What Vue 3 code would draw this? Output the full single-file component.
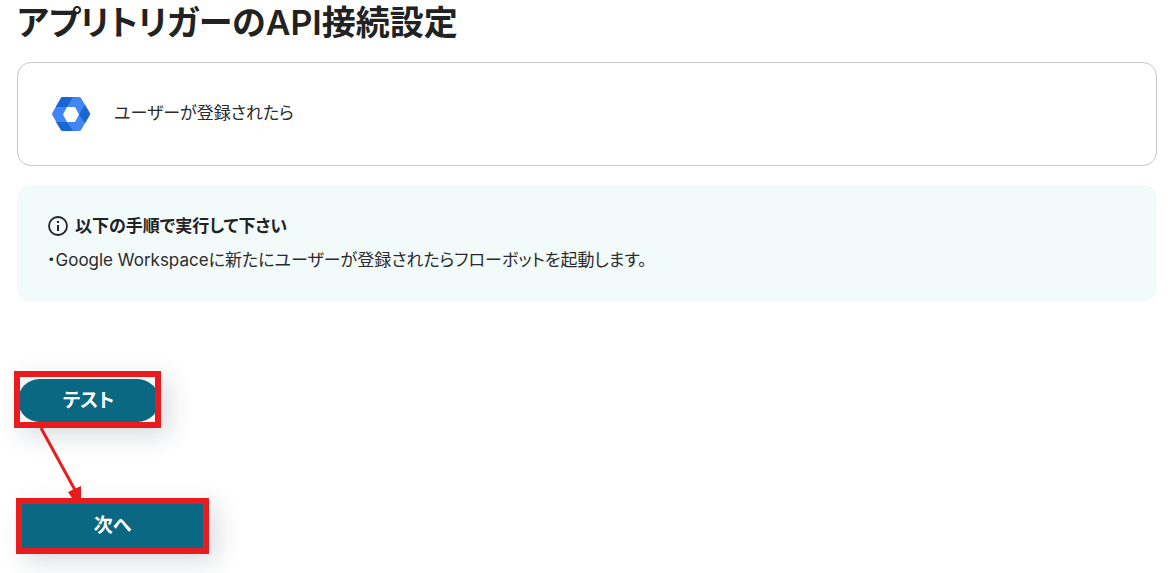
<script setup>
const title = 'アプリトリガーのAPI接続設定'
const trigger = 'ユーザーが登録されたら'
const steps = ['Google Workspaceに新たにユーザーが登録されたらフローボットを起動します。']
</script>

<template>
  <main class="page">
    <h1 class="title">{{ title }}</h1>

    <section class="card">
      <svg class="logo" viewBox="0 0 40 36" aria-hidden="true">
        <path fill="#4285f4" fill-rule="evenodd" d="M12 1H28Q29.500 1 30.200 2.200L38.600 16.700Q39.400 18 38.600 19.300L30.200 33.800Q29.500 35 28 35H12Q10.500 35 9.800 33.800L1.400 19.300Q.6 18 1.400 16.700L9.800 2.200Q10.500 1 12 1ZM16 11 12 18.500 16 26H24L28 18.500 24 11Z" />
        <path fill="#1967d2" d="M12 1H22L16 11H4.700L9.800 2.200Q10.500 1 12 1Z" />
        <path fill="#1967d2" d="M34 8.800 38.600 16.700Q39.400 18 38.600 19.300L34 27.200 28 18.500Z" />
        <path fill="#1967d2" d="M5 26H16L22 35H12Q10.500 35 9.800 33.800Z" />
      </svg>
      <p class="trigger">{{ trigger }}</p>
    </section>

    <section class="notice">
      <h2 class="notice-title">
        <svg class="info" viewBox="0 0 20 20" aria-hidden="true">
          <circle cx="10" cy="10" r="9" fill="none" stroke="currentColor" stroke-width="1.800" />
          <path d="M9 9h2v6H9zM9 5h2v2H9z" fill="currentColor" />
        </svg>
        以下の手順で実行して下さい
      </h2>
      <p v-for="step in steps" :key="step" class="step">・{{ step }}</p>
    </section>

    <div class="actions">
      <div class="frame frame-test">
        <button type="button" class="button button-test">テスト</button>
      </div>
      <svg class="arrow" viewBox="0 0 50 70" aria-hidden="true">
        <path d="M27 0 61 62" stroke="#e81c1e" stroke-width="3" />
        <path d="M54 64 67 58V70H58Z" fill="#e81c1e" />
      </svg>
      <div class="frame frame-next">
        <button type="button" class="button button-next">次へ</button>
      </div>
    </div>
  </main>
</template>

<style>
body {
  background: #fff;
}
</style>

<style scoped>
.page {
  padding: 0 13px 19px 17px;
  color: #222;
  font-family: Inter, "Noto Sans CJK JP", sans-serif;
  font-size: 17px;
  line-height: 34px;
  font-feature-settings: "palt";
}

.title {
  margin: 0 0 16px;
  font-size: 34px;
  font-weight: 600;
  line-height: 46px;
}

.card {
  display: flex;
  align-items: center;
  gap: 23px;
  padding: 33px;
  border: 1px solid #c8c8c8;
  border-radius: 14px;
}

.logo {
  flex: none;
  width: 40px;
  height: 36px;
}

.trigger,
.step {
  margin: 0;
  color: #2b2b2b;
}

.trigger {
  padding-bottom: 2px;
}

.notice {
  margin-top: 19px;
  padding: 24px 30px 25px;
  border-radius: 14px;
  background: #f2fafa;
}

.notice-title {
  display: flex;
  align-items: center;
  gap: 7px;
  margin: 0;
  padding-left: 1px;
  font-size: 17px;
  font-weight: 600;
}

.info {
  flex: none;
  width: 20px;
  height: 20px;
}

.actions {
  display: flex;
  flex-direction: column;
  align-items: flex-start;
  margin: 69px 0 0 -3px;
}

.frame {
  display: flex;
  border: 6px solid #e81c1e;
  box-shadow: 8px 8px 24px rgba(20, 45, 65, 0.16);
}

.frame-test {
  width: 147px;
  height: 57px;
  box-sizing: border-box;
  padding-top: 2px;
  overflow: hidden;
  background: #f6f7f8;
}

.frame-next {
  width: 193px;
  height: 56px;
  box-sizing: border-box;
  margin-left: 2px;
}

.button {
  flex: 1;
  padding: 0;
  border: 0;
  background: #0b6882;
  color: #fff;
  font: inherit;
  font-size: 19px;
  font-weight: 700;
}

.button-test {
  margin: 0 -4px 0 -2px;
  border-radius: 22px;
}

.arrow {
  position: relative;
  width: 50px;
  height: 70px;
  overflow: visible;
}
</style>
